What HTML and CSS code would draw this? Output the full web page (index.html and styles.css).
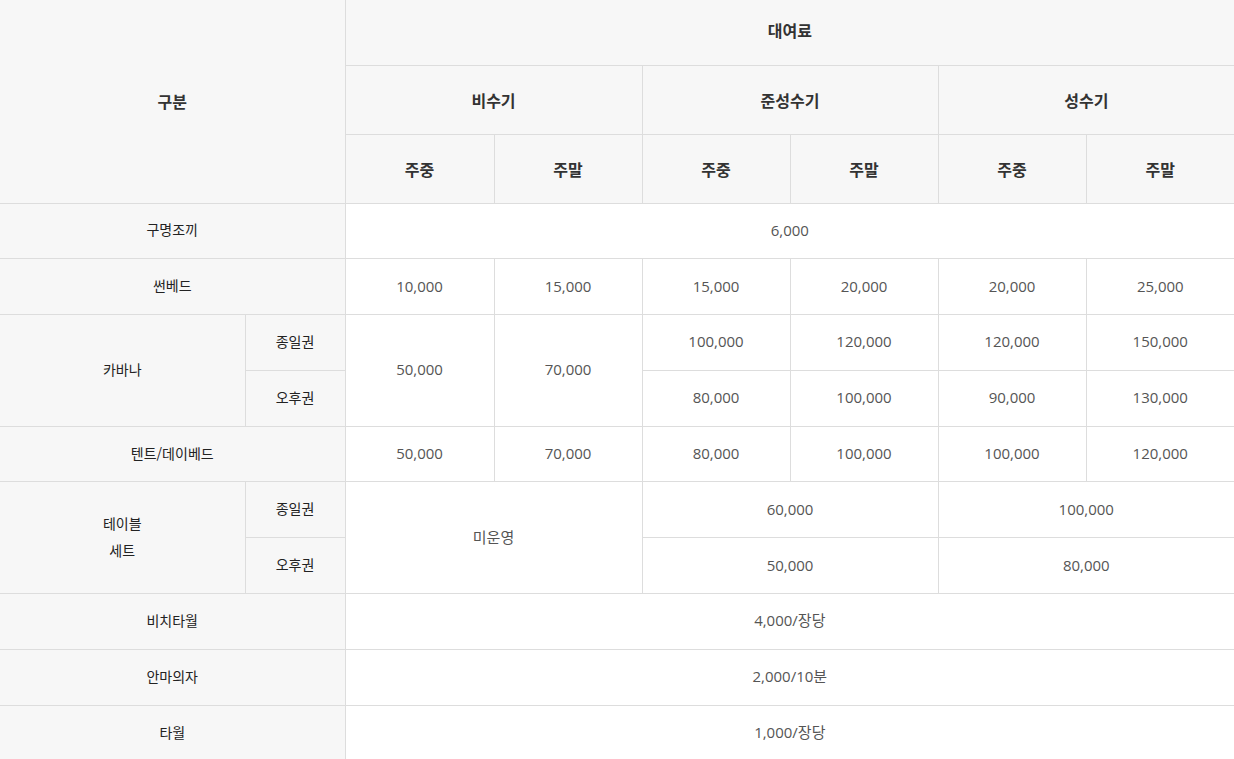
FILE: index.html
```html
<!DOCTYPE html>
<html lang="ko">
<head>
<meta charset="utf-8">
<link rel="stylesheet" href="styles.css">
</head>
<body>
<table class="price">
  <colgroup>
    <col class="c-a"><col class="c-b">
    <col class="c-v1"><col class="c-v"><col class="c-v"><col class="c-v"><col class="c-v"><col class="c-v">
  </colgroup>
  <thead>
    <tr class="h1">
      <th colspan="2" rowspan="3">구분</th>
      <th colspan="6">대여료</th>
    </tr>
    <tr class="h2">
      <th colspan="2">비수기</th>
      <th colspan="2">준성수기</th>
      <th colspan="2">성수기</th>
    </tr>
    <tr class="h3">
      <th>주중</th><th>주말</th><th>주중</th><th>주말</th><th>주중</th><th>주말</th>
    </tr>
  </thead>
  <tbody>
    <tr>
      <th colspan="2">구명조끼</th>
      <td colspan="6">6,000</td>
    </tr>
    <tr>
      <th colspan="2">썬베드</th>
      <td>10,000</td><td>15,000</td><td>15,000</td><td>20,000</td><td>20,000</td><td>25,000</td>
    </tr>
    <tr>
      <th rowspan="2">카바나</th>
      <th>종일권</th>
      <td rowspan="2">50,000</td><td rowspan="2">70,000</td>
      <td>100,000</td><td>120,000</td><td>120,000</td><td>150,000</td>
    </tr>
    <tr>
      <th>오후권</th>
      <td>80,000</td><td>100,000</td><td>90,000</td><td>130,000</td>
    </tr>
    <tr>
      <th colspan="2">텐트/데이베드</th>
      <td>50,000</td><td>70,000</td><td>80,000</td><td>100,000</td><td>100,000</td><td>120,000</td>
    </tr>
    <tr>
      <th rowspan="2">테이블<br>세트</th>
      <th>종일권</th>
      <td colspan="2" rowspan="2">미운영</td>
      <td colspan="2">60,000</td><td colspan="2">100,000</td>
    </tr>
    <tr>
      <th>오후권</th>
      <td colspan="2">50,000</td><td colspan="2">80,000</td>
    </tr>
    <tr>
      <th colspan="2">비치타월</th>
      <td colspan="6">4,000/장당</td>
    </tr>
    <tr>
      <th colspan="2">안마의자</th>
      <td colspan="6">2,000/10분</td>
    </tr>
    <tr>
      <th colspan="2">타월</th>
      <td colspan="6">1,000/장당</td>
    </tr>
  </tbody>
</table>
</body>
</html>
```

FILE: styles.css
```css
html, body {
  margin: 0;
  padding: 0;
  background: #ffffff;
}

.price {
  width: 1234px;
  border-collapse: collapse;
  table-layout: fixed;
  font-family: "Open Sans", "Noto Sans CJK KR", sans-serif;
  font-size: 15px;
}

.c-a { width: 245px; }
.c-b { width: 100px; }
.c-v1 { width: 149px; }
.c-v { width: 148px; }

.price th,
.price td {
  border: 1px solid #dddddd;
  text-align: center;
  vertical-align: middle;
  padding: 0;
}

.price tr > :first-child { border-left: none; }
.price tr > :last-child { border-right: none; }
.price thead tr.h1 th { border-top: none; }

.price thead th {
  background: #f7f7f7;
  color: #333333;
  font-family: "Noto Sans CJK KR", sans-serif;
  font-size: 16px;
  font-weight: 700;
  line-height: 20px;
}

.price thead tr.h1 { height: 65px; }
.price thead tr.h1 th:last-child { padding-bottom: 4px; }
.price thead tr.h2 { height: 69px; }
.price thead tr.h3 { height: 69px; }

.price tbody tr { height: 55.8px; }

.price tbody th {
  background: #f7f7f7;
  color: #222222;
  font-family: "Noto Sans CJK KR", sans-serif;
  font-weight: 400;
  font-size: 14px;
  line-height: 27px;
  padding-bottom: 2px;
}

.price tbody td {
  color: #555555;
  background: #ffffff;
  line-height: 20px;
  padding-bottom: 2px;
}
```
